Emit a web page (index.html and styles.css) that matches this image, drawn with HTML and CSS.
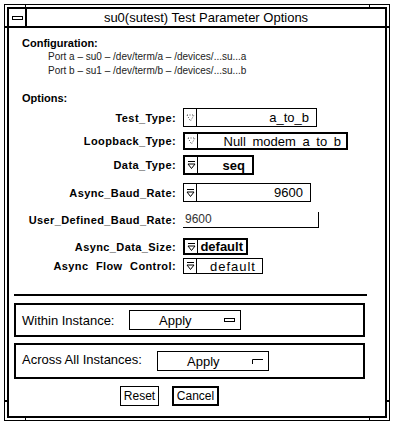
FILE: index.html
```html
<!DOCTYPE html>
<html>
<head>
<meta charset="utf-8">
<link rel="stylesheet" href="styles.css">
</head>
<body>
<div class="outer">
  <span class="tick tick-top tick-l"></span>
  <span class="tick tick-top tick-r"></span>
  <span class="tick tick-bot tick-l"></span>
  <span class="tick tick-bot tick-r"></span>
  <span class="tick tick-side tick-upper tick-sl"></span>
  <span class="tick tick-side tick-upper tick-sr"></span>
  <span class="tick tick-side tick-lower tick-sl"></span>
  <span class="tick tick-side tick-lower tick-sr"></span>
  <div class="window">
    <div class="titlebar">
      <div class="menubtn"><span class="menubar"></span></div>
      <div class="title">su0(sutest) Test Parameter Options</div>
    </div>
    <div class="content">
      <div class="heading">Configuration:</div>
      <div class="port">Port a – su0 – /dev/term/a – /devices/...su...a</div>
      <div class="port">Port b – su1 – /dev/term/b – /devices/...su...b</div>
      <div class="heading options">Options:</div>
      <div class="rows">
        <div class="row r1">
          <div class="label">Test_Type:</div>
          <div class="choice w-test">
            <span class="mb"><svg width="9" height="10" viewBox="0 0 9 10"><polygon points="1,2 8,2 4.5,8" fill="none" stroke="#555" stroke-width="1" stroke-dasharray="1 1.5"/></svg></span>
            <span class="val">a_to_b</span>
          </div>
        </div>
        <div class="row r2">
          <div class="label">Loopback_Type:</div>
          <div class="choice thick w-loop">
            <span class="mb"><svg width="9" height="10" viewBox="0 0 9 10"><polygon points="1,2 8,2 4.5,8" fill="none" stroke="#555" stroke-width="1" stroke-dasharray="1 1.5"/></svg></span>
            <span class="val val-loop">Null modem a to b</span>
          </div>
        </div>
        <div class="row r3">
          <div class="label">Data_Type:</div>
          <div class="choice thick w-data">
            <span class="mb"><svg width="9" height="10" viewBox="0 0 9 10"><path d="M1 1.5H8M1 4H8L4.5 8.5Z" fill="none" stroke="#000" stroke-width="1"/></svg></span>
            <span class="val val-seq">seq</span>
          </div>
        </div>
        <div class="row r4">
          <div class="label">Async_Baud_Rate:</div>
          <div class="choice w-baud">
            <span class="mb"><svg width="9" height="10" viewBox="0 0 9 10"><path d="M1 1.5H8M1 4H8L4.5 8.5Z" fill="none" stroke="#000" stroke-width="1"/></svg></span>
            <span class="val">9600</span>
          </div>
        </div>
        <div class="row r5">
          <div class="label">User_Defined_Baud_Rate:</div>
          <div class="field">9600</div>
        </div>
        <div class="row r6">
          <div class="label">Async_Data_Size:</div>
          <div class="choice thick w-size">
            <span class="mb"><svg width="9" height="10" viewBox="0 0 9 10"><path d="M1 1.5H8M1 4H8L4.5 8.5Z" fill="none" stroke="#000" stroke-width="1"/></svg></span>
            <span class="val val-bold">default</span>
          </div>
        </div>
        <div class="row r7">
          <div class="label label-spaced">Async Flow Control:</div>
          <div class="choice w-flow">
            <span class="mb"><svg width="9" height="10" viewBox="0 0 9 10"><path d="M1 1.5H8M1 4H8L4.5 8.5Z" fill="none" stroke="#000" stroke-width="1"/></svg></span>
            <span class="val val-flow">default</span>
          </div>
        </div>
      </div>
      <div class="sep"></div>
      <div class="panel panel-within">
        <div class="plabel plabel-within">Within Instance:</div>
        <div class="apply">
          <span class="apply-text">Apply</span>
          <span class="apply-icon"></span>
        </div>
      </div>
      <div class="panel panel-across">
        <div class="plabel plabel-across">Across All Instances:</div>
        <div class="apply">
          <span class="apply-text">Apply</span>
          <svg class="apply-svg" width="11" height="5" viewBox="0 0 11 5"><path d="M0.5 5V0.5H11" fill="none" stroke="#000" stroke-width="1"/></svg>
        </div>
      </div>
      <div class="buttons">
        <div class="btn btn-reset">Reset</div>
        <div class="btn btn-cancel">Cancel</div>
      </div>
    </div>
  </div>
</div>
</body>
</html>
```

FILE: styles.css
```css
html, body {
  margin: 0;
  padding: 0;
  background: #fff;
}

body {
  font-family: "Liberation Sans", Arial, sans-serif;
  color: #000;
}

.outer {
  position: relative;
  margin: 4px 0 0 4px;
  width: 386px;
  height: 417px;
  box-sizing: border-box;
  border: 1px solid #000;
  padding: 2px;
}

.tick {
  position: absolute;
  background: #000;
}
.tick-top, .tick-bot { width: 1px; height: 2px; }
.tick-top { top: 0; }
.tick-bot { bottom: 0; }
.tick-l { left: 20px; }
.tick-r { right: 19px; }
.tick-side { width: 2px; height: 2px; }
.tick-upper { top: 21px; }
.tick-lower { bottom: 18px; }
.tick-sl { left: 0; }
.tick-sr { right: 0; }

.window {
  height: 100%;
  box-sizing: border-box;
  border: 2px solid #000;
  display: flex;
  flex-direction: column;
}

.titlebar {
  height: 17px;
  border-bottom: 2px solid #000;
  display: flex;
}

.menubtn {
  width: 16px;
  border-right: 2px solid #000;
  display: flex;
  align-items: center;
  justify-content: center;
}

.menubar {
  width: 9px;
  height: 2px;
  border: 1px solid #000;
}

.title {
  flex: 1;
  text-align: center;
  font-size: 13px;
  line-height: 17px;
}

.content {
  flex: 1;
  padding-top: 8px;
}

.heading {
  margin-left: 13px;
  font-size: 11px;
  font-weight: bold;
  line-height: 14px;
}

.options {
  margin-top: 13px;
}

.port {
  margin-left: 39px;
  font-size: 10px;
  line-height: 14px;
  color: #222;
}

.rows {
  margin-top: 3px;
}

.row {
  display: flex;
  align-items: center;
}
.r1 { height: 19px; }
.r2 { height: 18px; margin-top: 5px; }
.r3 { height: 20px; margin-top: 5px; }
.r4 { height: 19px; margin-top: 8px; }
.r5 { height: 16px; margin-top: 10px; }
.r6 { height: 17px; margin-top: 10px; }
.r7 { height: 16px; margin-top: 3px; }

.label {
  width: 167px;
  text-align: right;
  font-size: 11px;
  font-weight: bold;
  letter-spacing: 0.4px;
  white-space: nowrap;
}
.label-spaced { word-spacing: 4px; }

.choice {
  margin-left: 7px;
  height: 100%;
  box-sizing: border-box;
  border: 1px solid #000;
  display: flex;
}
.choice.thick { border-width: 2px; }

.w-test { width: 134px; }
.w-loop { width: 165px; }
.w-data { width: 71px; }
.w-baud { width: 128px; }
.w-size { width: 65px; }
.w-flow { width: 80px; }

.mb {
  width: 12px;
  border-right: 1px solid #000;
  display: flex;
  align-items: center;
  justify-content: center;
}

.val {
  flex: 1;
  display: flex;
  align-items: center;
  justify-content: flex-end;
  padding-right: 7px;
  font-size: 13px;
  white-space: nowrap;
}
.val-loop { word-spacing: 3px; padding-right: 5px; }
.val-seq { font-weight: bold; }
.val-bold { font-weight: bold; padding-right: 3px; }
.val-flow { letter-spacing: 1px; padding-right: 6px; }

.field {
  margin-left: 7px;
  width: 136px;
  height: 100%;
  box-sizing: border-box;
  border-bottom: 1px solid #000;
  border-right: 1px solid #000;
  padding-left: 2px;
  font-size: 12px;
  line-height: 15px;
  color: #333;
}

.sep {
  margin: 20px 0 0 5px;
  width: 353px;
  height: 2px;
  background: #000;
}

.panel {
  margin-left: 5px;
  width: 351px;
  box-sizing: border-box;
  border: 2px solid #000;
  display: flex;
  align-items: center;
  padding-left: 6px;
}
.panel-within { margin-top: 7px; height: 34px; }
.panel-across { margin-top: 6px; height: 36px; }

.plabel {
  font-size: 13px;
  white-space: nowrap;
}
.plabel-within { width: 107px; }
.plabel-across { width: 135px; padding-bottom: 4px; }

.apply {
  width: 112px;
  height: 20px;
  box-sizing: border-box;
  border: 1px solid #000;
  display: flex;
  align-items: center;
  font-size: 13px;
}

.apply-text {
  margin-left: 29px;
}

.apply-icon {
  margin-left: auto;
  margin-right: 5px;
  width: 9px;
  height: 2px;
  border: 1px solid #000;
}

.apply-svg {
  margin-left: auto;
  margin-right: 5px;
}

.buttons {
  margin-top: 7px;
  display: flex;
}

.btn {
  height: 20px;
  box-sizing: border-box;
  border: 1px solid #000;
  font-size: 12px;
  line-height: 18px;
  text-align: center;
  overflow: hidden;
  white-space: nowrap;
}
.btn-reset { margin-left: 111px; width: 39px; }
.btn-cancel { margin-left: 13px; width: 47px; border-width: 2px; line-height: 16px; }
```
